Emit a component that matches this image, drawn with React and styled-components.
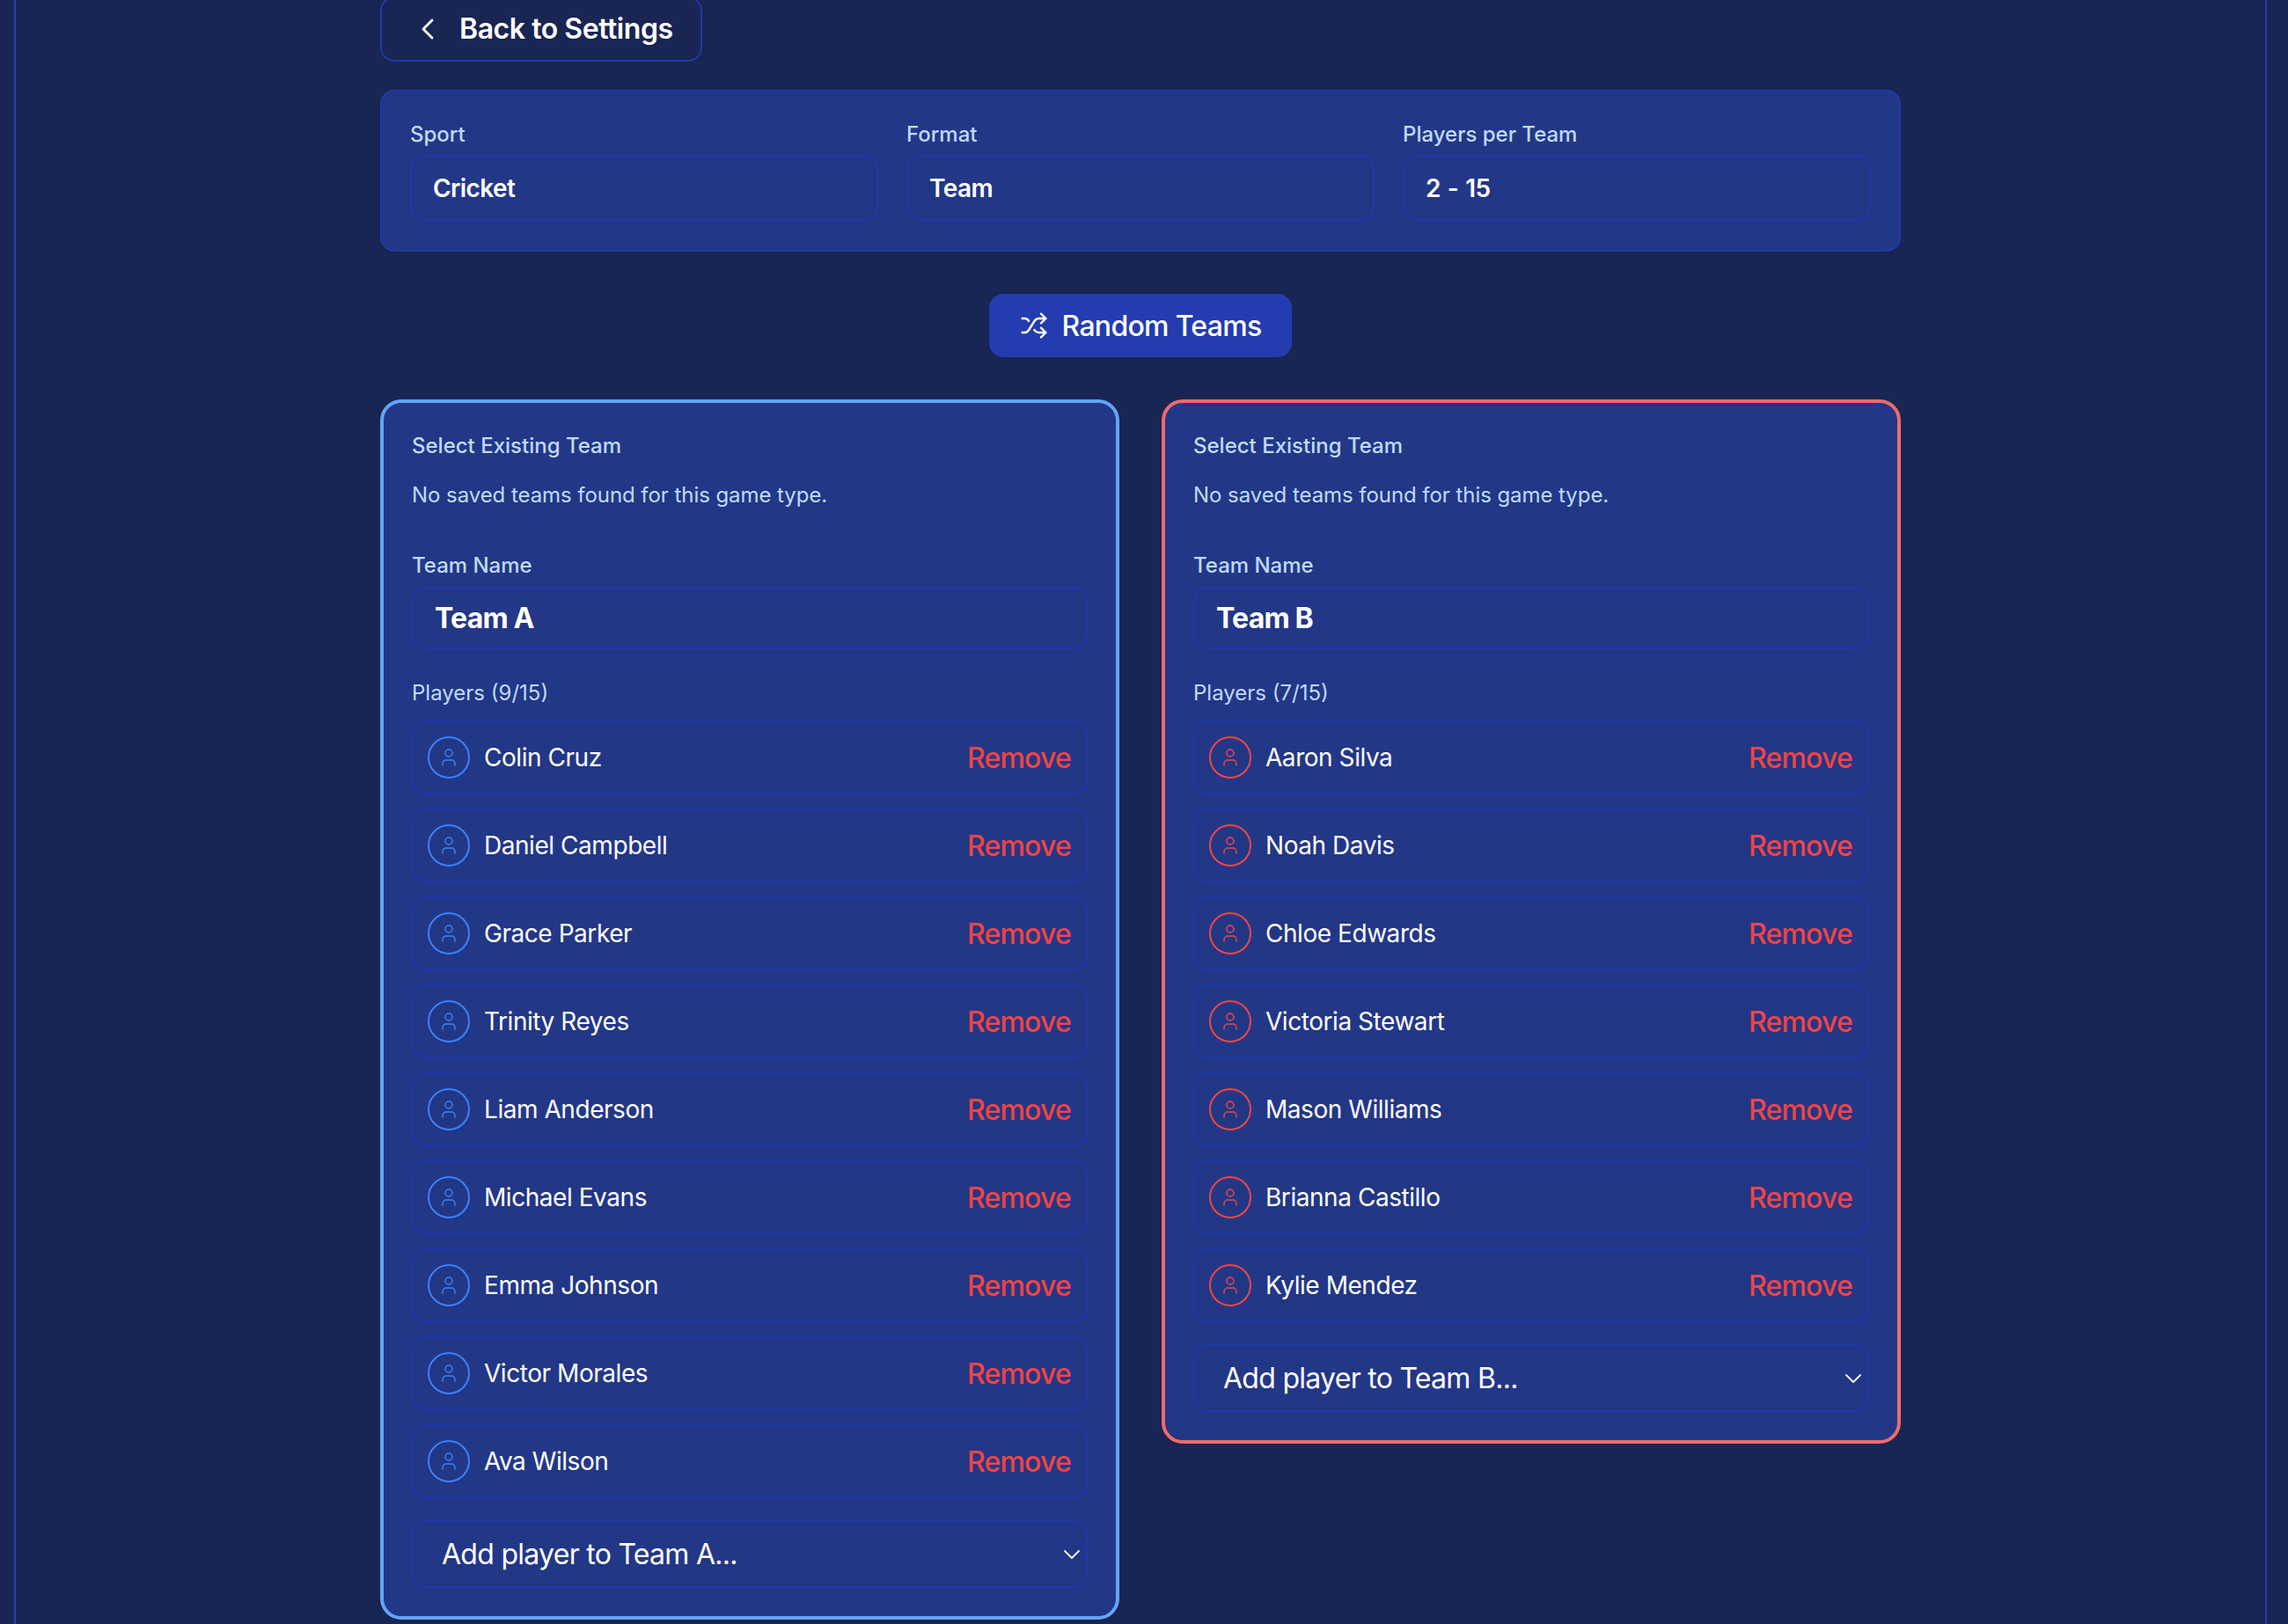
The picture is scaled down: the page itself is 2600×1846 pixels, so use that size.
import { ChevronDown, ChevronLeft, Shuffle, User } from "lucide-react";
import styled, { createGlobalStyle } from "styled-components";

const teams = [
  {
    id: "A",
    avatar: "#3b82f6",
    border: "#60a5fa",
    players: [
      "Colin Cruz",
      "Daniel Campbell",
      "Grace Parker",
      "Trinity Reyes",
      "Liam Anderson",
      "Michael Evans",
      "Emma Johnson",
      "Victor Morales",
      "Ava Wilson",
    ],
  },
  {
    id: "B",
    avatar: "#ef4444",
    border: "#ee6b6b",
    players: [
      "Aaron Silva",
      "Noah Davis",
      "Chloe Edwards",
      "Victoria Stewart",
      "Mason Williams",
      "Brianna Castillo",
      "Kylie Mendez",
    ],
  },
];

const settings = [
  { label: "Sport", value: "Cricket" },
  { label: "Format", value: "Team" },
  { label: "Players per Team", value: "2 - 15" },
];

export default function App() {
  return (
    <>
      <GlobalStyle />
      <Frame>
        <Content>
          <BackButton>
            <ChevronLeft size={40} strokeWidth={1.7} />
            <BackText>Back to Settings</BackText>
          </BackButton>

          <SettingsPanel>
            {settings.map((s) => (
              <div key={s.label}>
                <FieldLabel>{s.label}</FieldLabel>
                <ValueBox>{s.value}</ValueBox>
              </div>
            ))}
          </SettingsPanel>

          <RandomRow>
            <RandomButton>
              <Shuffle size={32} strokeWidth={1.8} />
              Random Teams
            </RandomButton>
          </RandomRow>

          <TeamsGrid>
            {teams.map((team) => (
              <TeamCard key={team.id} $border={team.border}>
                <CardLabel>Select Existing Team</CardLabel>
                <EmptyNote>No saved teams found for this game type.</EmptyNote>
                <CardLabel>Team Name</CardLabel>
                <NameBox>Team {team.id}</NameBox>
                <PlayersLabel>
                  Players ({team.players.length}/15)
                </PlayersLabel>
                <PlayerList>
                  {team.players.map((name) => (
                    <PlayerRow key={name}>
                      <Avatar $color={team.avatar}>
                        <User size={24} strokeWidth={1.5} />
                      </Avatar>
                      <PlayerName>{name}</PlayerName>
                      <RemoveButton>Remove</RemoveButton>
                    </PlayerRow>
                  ))}
                </PlayerList>
                <AddPlayer>
                  Add player to Team {team.id}...
                  <ChevronDown size={32} strokeWidth={1.35} />
                </AddPlayer>
              </TeamCard>
            ))}
          </TeamsGrid>
        </Content>
      </Frame>
    </>
  );
}

// =========================== STYLES ============================= //

const GlobalStyle = createGlobalStyle`
  html, body {
    margin: 0;
    height: 100%;
    overflow: hidden;
    background: #192552;
  }
  * {
    box-sizing: border-box;
  }
  body {
    font-family: "Inter", "Liberation Sans", sans-serif;
    color: #ffffff;
  }
`;

const Frame = styled.div`
  margin: 0 24px 0 16px;
  height: 1846px;
  border-left: 2px solid #253cad;
  border-right: 2px solid #253cad;
  overflow: hidden;
`;

const Content = styled.div`
  width: 1728px;
  margin: -4px auto 0;
`;

const BackButton = styled.button`
  display: flex;
  align-items: center;
  gap: 16px;
  width: 366px;
  height: 74px;
  padding: 0 0 0 32px;
  background: transparent;
  border: 2px solid #1f39ab;
  border-radius: 16px;
  color: #ffffff;
  font: 600 32px "Inter", sans-serif;
  letter-spacing: -0.45px;
`;

const BackText = styled.span`
  position: relative;
  top: -1px;
`;

const SettingsPanel = styled.section`
  display: grid;
  grid-template-columns: repeat(3, 1fr);
  gap: 32px;
  margin-top: 32px;
  padding: 32px 32px 33px;
  background: #233787;
  border: 2px solid #1f39ab;
  border-radius: 16px;
`;

const FieldLabel = styled.div`
  height: 40px;
  padding-top: 1px;
  line-height: 32px;
  font-size: 24px;
  font-weight: 500;
  color: #bfdbfe;
`;

const ValueBox = styled.div`
  display: flex;
  align-items: center;
  height: 75px;
  padding: 0 24px;
  border: 2px solid #1f39ab;
  border-radius: 16px;
  font-size: 28px;
  font-weight: 600;
  letter-spacing: -0.6px;
  word-spacing: 1.5px;
`;

const RandomRow = styled.div`
  display: flex;
  justify-content: center;
  margin-top: 48px;
`;

const RandomButton = styled.button`
  display: flex;
  align-items: center;
  justify-content: center;
  gap: 16px;
  width: 344px;
  height: 72px;
  background: #233cb0;
  border: 0;
  border-radius: 16px;
  color: #ffffff;
  font: 500 32px "Inter", sans-serif;
  letter-spacing: -0.7px;
`;

const TeamsGrid = styled.div`
  display: grid;
  grid-template-columns: 1fr 1fr;
  align-items: start;
  gap: 48px;
  margin-top: 48px;
`;

const TeamCard = styled.section`
  padding: 33px 32px 32px;
  background: #233787;
  border: 4px solid ${(p) => p.$border};
  border-radius: 24px;
`;

const CardLabel = styled.div`
  line-height: 32px;
  font-size: 24px;
  font-weight: 500;
  color: #bfdbfe;
`;

const EmptyNote = styled.p`
  margin: 24px 0 48px;
  line-height: 32px;
  font-size: 24px;
  letter-spacing: -0.06px;
  color: #bfdbfe;
`;

const NameBox = styled.div`
  display: flex;
  align-items: center;
  height: 71px;
  margin-top: 8px;
  padding: 0 24px;
  border: 2px solid #1f39ab;
  border-radius: 16px;
  font-size: 32px;
  font-weight: 700;
  letter-spacing: -0.8px;
`;

const PlayersLabel = styled.div`
  margin-top: 34px;
  line-height: 32px;
  font-size: 24px;
  color: #bfdbfe;
`;

const PlayerList = styled.div`
  display: flex;
  flex-direction: column;
  gap: 16px;
  margin-top: 15px;
`;

const PlayerRow = styled.div`
  display: flex;
  align-items: center;
  height: 84px;
  padding: 0 17px 0 16px;
  border: 2px solid #1f39ab;
  border-radius: 16px;
`;

const Avatar = styled.span`
  display: flex;
  align-items: center;
  justify-content: center;
  width: 48px;
  height: 48px;
  border: 2px solid ${(p) => p.$color};
  border-radius: 50%;
  color: ${(p) => p.$color};
`;

const PlayerName = styled.span`
  flex: 1;
  margin-left: 16px;
  font-size: 28px;
  letter-spacing: -0.45px;
`;

const RemoveButton = styled.button`
  padding: 0;
  background: none;
  border: 0;
  color: #ef4444;
  font: 500 32px "Inter", sans-serif;
  letter-spacing: -0.8px;
`;

const AddPlayer = styled.div`
  display: flex;
  align-items: center;
  justify-content: space-between;
  height: 77px;
  margin-top: 25px;
  padding: 0 0 0 32px;
  border: 2px solid #1f39ab;
  border-radius: 16px;
  font-size: 32px;
  letter-spacing: -0.72px;
`;
